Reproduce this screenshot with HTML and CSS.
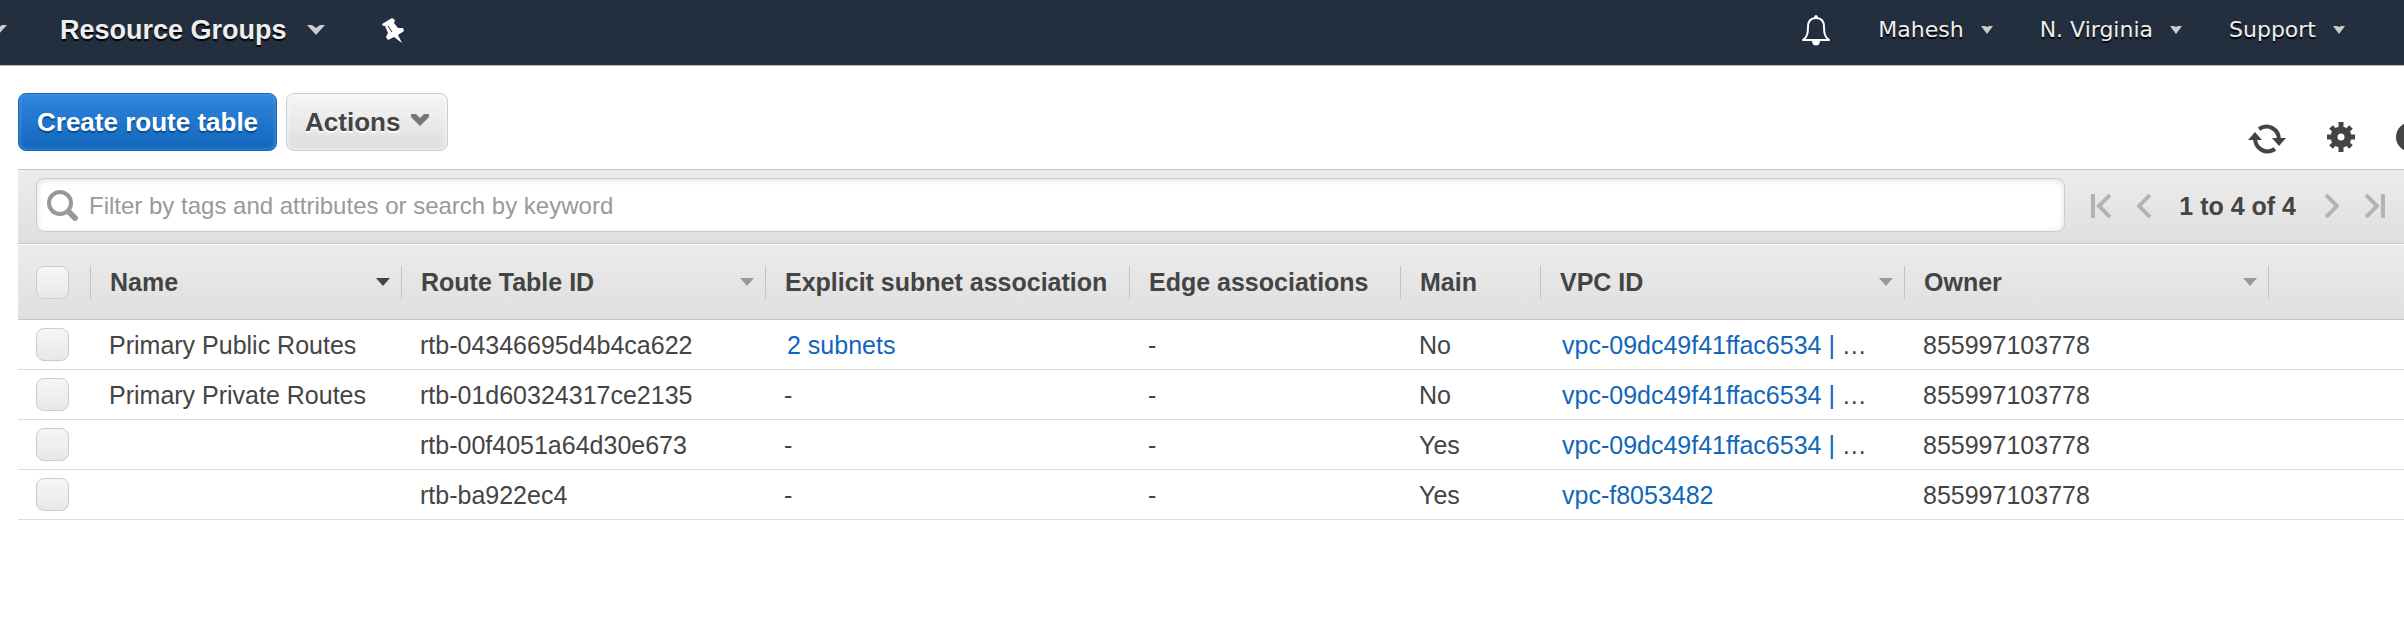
FILE: index.html
```html
<!DOCTYPE html>
<html lang="en">
<head>
<meta charset="utf-8">
<title>Route Tables</title>
<link rel="stylesheet" href="styles.css">
</head>
<body>
<header class="nav">
  <div class="nav-left">
    <button class="nav-menu nav-services" aria-label="Services"><svg class="chev" viewBox="0 0 18 10"><path d="M0 0h5l4 3 4-3h5L9 10z"/></svg></button>
    <button class="nav-menu nav-groups">Resource Groups <svg class="chev" viewBox="0 0 18 10"><path d="M0 0h5l4 3 4-3h5L9 10z"/></svg></button>
    <button class="nav-menu" aria-label="Pin shortcuts"><svg class="pin" viewBox="0 0 22 25"><path d="M0 6 10 0l3 2-1 3 4 5 5 0 1 3-6 4 4 8-8-6-6 3-2-3 2-4-3-7-2 0z"/><path d="m6 8 4 6" fill="none" stroke="#232f3e" stroke-width="1"/></svg></button>
  </div>
  <div class="nav-right">
    <button class="nav-menu" aria-label="Notifications"><svg class="bell" viewBox="0 0 30 32"><path d="M15 4c-5 0-8 3-8 9 0 7-1 10-5 13h26c-4-3-5-6-5-13 0-6-3-9-8-9z" fill="none" stroke="#fff" stroke-width="2" stroke-linejoin="round"/><path d="M13 4c0-4 4-4 4 0zM11 27h8c0 6-8 6-8 0z" fill="#fff"/></svg></button>
    <button class="nav-menu">Mahesh <svg class="tri" viewBox="0 0 12 8"><path d="M0 0h4l2 1 2-1h4L6 8z"/></svg></button>
    <button class="nav-menu">N. Virginia <svg class="tri" viewBox="0 0 12 8"><path d="M0 0h4l2 1 2-1h4L6 8z"/></svg></button>
    <button class="nav-menu">Support <svg class="tri" viewBox="0 0 12 8"><path d="M0 0h4l2 1 2-1h4L6 8z"/></svg></button>
  </div>
</header>
<main>
  <div class="toolbar">
    <div class="actions">
      <button class="btn btn-primary">Create route table</button>
      <button class="btn btn-plain">Actions <svg class="chev" viewBox="0 0 18 12"><path d="M0 0h5l4 4 4-4h5v3l-9 9-9-9z"/></svg></button>
    </div>
    <div class="tools">
      <button class="tool" aria-label="Refresh"><svg class="refresh" viewBox="0 -2 38 32"><g fill="none" stroke="#444" stroke-width="4"><path d="M11 5c9-6 20 0 20 11"/><path d="M27 25c-9 6-20 0-20-11"/></g><path d="M24 14h14l-7 8zM0 16h14L7 8z" fill="#444"/></svg></button>
      <button class="tool" aria-label="Settings"><svg class="gear" viewBox="0 0 28 30"><g fill="none" stroke="#444"><circle cx="14" cy="15" r="7" stroke-width="7"/><path d="M14 0v8M14 22v8M0 15h7M21 15h7M4 5l5 5M19 20l5 5M24 5l-5 5M9 20l-5 5" stroke-width="5"/></g></svg></button>
      <button class="tool" aria-label="Help"><svg class="help" viewBox="0 0 30 30"><circle cx="15" cy="15" r="15" fill="#444"/></svg></button>
    </div>
  </div>
  <div class="filter">
    <label class="search">
      <svg class="glass" viewBox="0 0 32 32"><circle cx="13" cy="13" r="11" fill="none" stroke="#999" stroke-width="4"/><path d="m22 22 6 6" stroke="#999" stroke-width="6" stroke-linecap="round"/></svg>
      <input class="search-input" type="text" aria-label="Filter" placeholder="Filter by tags and attributes or search by keyword">
    </label>
    <div class="pager">
      <button class="page" aria-label="First page"><svg class="page-end" viewBox="0 0 20 24"><path d="M2 0v24M19 1 8 12l11 11"/></svg></button>
      <button class="page" aria-label="Previous page"><svg class="page-step" viewBox="0 0 14 24"><path d="M13 1 2 12l11 11"/></svg></button>
      <span class="page-count">1 to 4 of 4</span>
      <button class="page" aria-label="Next page"><svg class="page-step" viewBox="0 0 14 24"><path d="m1 1 11 11L1 23"/></svg></button>
      <button class="page" aria-label="Last page"><svg class="page-end" viewBox="0 0 20 24"><path d="M18 0v24M1 1l11 11L1 23"/></svg></button>
    </div>
  </div>
  <table class="grid">
    <colgroup><col class="c-check"><col class="c-name"><col class="c-id"><col class="c-id"><col class="c-edge"><col class="c-main"><col class="c-id"><col class="c-id"><col></colgroup>
    <thead>
      <tr>
        <th><div class="head"><input class="tick" type="checkbox" aria-label="Select all"></div></th>
        <th><div class="head sorted"><span>Name</span><svg class="sort" viewBox="0 0 14 8"><path d="M0 0h14L7 8z"/></svg></div></th>
        <th><div class="head"><span>Route Table ID</span><svg class="sort" viewBox="0 0 14 8"><path d="M0 0h14L7 8z"/></svg></div></th>
        <th><div class="head"><span>Explicit subnet association</span></div></th>
        <th><div class="head"><span>Edge associations</span></div></th>
        <th><div class="head"><span>Main</span></div></th>
        <th><div class="head"><span>VPC ID</span><svg class="sort" viewBox="0 0 14 8"><path d="M0 0h14L7 8z"/></svg></div></th>
        <th><div class="head"><span>Owner</span><svg class="sort" viewBox="0 0 14 8"><path d="M0 0h14L7 8z"/></svg></div></th>
        <th></th>
      </tr>
    </thead>
    <tbody>
      <tr><td><input class="tick" type="checkbox" aria-label="Select rtb-04346695d4b4ca622"></td><td>Primary Public Routes</td><td>rtb-04346695d4b4ca622</td><td><a href="#">2 subnets</a></td><td>-</td><td>No</td><td><a href="#">vpc-09dc49f41ffac6534 |</a> …</td><td>855997103778</td><td></td></tr>
      <tr><td><input class="tick" type="checkbox" aria-label="Select rtb-01d60324317ce2135"></td><td>Primary Private Routes</td><td>rtb-01d60324317ce2135</td><td>-</td><td>-</td><td>No</td><td><a href="#">vpc-09dc49f41ffac6534 |</a> …</td><td>855997103778</td><td></td></tr>
      <tr><td><input class="tick" type="checkbox" aria-label="Select rtb-00f4051a64d30e673"></td><td></td><td>rtb-00f4051a64d30e673</td><td>-</td><td>-</td><td>Yes</td><td><a href="#">vpc-09dc49f41ffac6534 |</a> …</td><td>855997103778</td><td></td></tr>
      <tr><td><input class="tick" type="checkbox" aria-label="Select rtb-ba922ec4"></td><td></td><td>rtb-ba922ec4</td><td>-</td><td>-</td><td>Yes</td><td><a href="#">vpc-f8053482</a></td><td>855997103778</td><td></td></tr>
    </tbody>
  </table>
</main>
</body>
</html>
```
FILE: styles.css
```css
* { box-sizing: border-box; }
body {
  margin: 0;
  overflow-x: hidden;
  background: #fff;
  color: #444;
  font: 25px/28px "Liberation Sans", Arial, sans-serif;
}
button { font: inherit; color: inherit; cursor: pointer; }
svg { display: block; flex: none; }

.nav {
  display: flex;
  justify-content: space-between;
  height: 66px;
  padding: 0 59px 5px 0;
  background: #232f3e;
  border-bottom: 1px solid #b9bdc2;
}
.nav-left, .nav-right { display: flex; align-items: center; }
.nav-left { gap: 53px; }
.nav-right { gap: 47px; font-family: "DejaVu Sans", Verdana, sans-serif; font-size: 22px; }
.nav-menu {
  display: flex;
  align-items: center;
  padding: 0;
  border: 0;
  background: none;
  color: #eee;
  white-space: nowrap;
  text-shadow: 0 2px 1px #000;
}
.nav-services { margin-left: -11px; }
.nav-groups { gap: 20px; margin-right: 4px; font-size: 27px; font-weight: bold; }
.nav-right .nav-menu { gap: 17px; }
.nav .chev { width: 18px; height: 10px; fill: #ccc; }
.tri { width: 12px; height: 8px; fill: #ccc; }
.pin { width: 22px; height: 25px; fill: #fff; }
.bell { width: 30px; height: 32px; }

.toolbar {
  display: flex;
  justify-content: space-between;
  align-items: flex-start;
  padding: 27px 0 15px 18px;
}
.actions { display: flex; gap: 9px; }
.btn {
  display: flex;
  align-items: center;
  gap: 11px;
  height: 58px;
  padding: 0 18px;
  border: 1px solid #ccc;
  border-radius: 8px;
  font-size: 26px;
  font-weight: bold;
  white-space: nowrap;
}
.btn-primary {
  border-color: #1166bb;
  background: linear-gradient(#2f86de, #1166bb);
  color: #fff;
  text-shadow: 0 2px 1px #0a4a8c;
  box-shadow: inset 0 0 4px #5a9be0;
}
.btn-plain {
  background: linear-gradient(#f6f6f6, #dedede);
  text-shadow: 0 2px 0 #fff;
  box-shadow: inset 0 0 4px #fff;
}
.btn .chev { width: 18px; height: 12px; fill: #777; margin-bottom: 4px; }
.tools { display: flex; align-items: flex-start; gap: 41px; margin: 29px -22px 0 0; }
.tool, .page { padding: 0; border: 0; background: none; }
.refresh { width: 38px; height: 32px; }
.gear { width: 28px; height: 30px; }
.help { width: 30px; height: 30px; }

.filter {
  display: flex;
  align-items: center;
  gap: 26px;
  height: 75px;
  margin-left: 18px;
  padding: 0 19px 3px 18px;
  border-top: 1px solid #c6c6c6;
  border-bottom: 1px solid #c6c6c6;
  background: linear-gradient(#ececec, #dfdfdf);
}
.search {
  flex: 1;
  display: flex;
  align-items: center;
  gap: 10px;
  height: 54px;
  padding: 2px 10px 0;
  border: 1px solid #ccc;
  border-radius: 8px;
  background: #fff;
  box-shadow: inset 0 1px 6px #ddd;
}
.glass { width: 32px; height: 32px; }
.search-input {
  flex: 1;
  min-width: 0;
  padding: 0;
  border: 0;
  outline: 0;
  background: none;
  color: #444;
  font: inherit;
  font-size: 24px;
}
.search-input::placeholder { color: #999; opacity: 1; }
.pager { display: flex; align-items: center; gap: 26px; padding-top: 2px; white-space: nowrap; }
.page-end, .page-step { fill: none; stroke: #b3b3b3; stroke-width: 4; }
.page-end { width: 20px; height: 24px; }
.page-step { width: 14px; height: 24px; }
.page-count { margin: 0 3px 0 2px; font-weight: bold; }

.grid {
  width: calc(100% - 18px);
  margin-left: 18px;
  table-layout: fixed;
  border-collapse: separate;
  border-spacing: 0;
}
.c-check { width: 73px; }
.c-name { width: 311px; }
.c-id { width: 364px; }
.c-edge { width: 271px; }
.c-main { width: 140px; }
.grid th {
  height: 76px;
  padding: 0;
  border-top: 1px solid #fff;
  border-bottom: 1px solid #c6c6c6;
  background: linear-gradient(#ececec, #dfdfdf);
  text-align: left;
}
.head {
  display: flex;
  align-items: center;
  justify-content: space-between;
  height: 33px;
  padding: 0 11px 0 19px;
  border-right: 1px solid #c4c4c4;
  box-shadow: 1px 0 #fff;
}
.head span { white-space: nowrap; line-height: 32px; }
th:first-child .head { padding: 0 18px; }
.sort { width: 14px; height: 8px; fill: #999; }
.sorted .sort { fill: #444; }
.grid td {
  height: 50px;
  padding: 0 18px;
  border-bottom: 1px solid #ddd;
  white-space: nowrap;
}
.grid a { margin-left: 3px; color: #1166bb; text-decoration: none; }
.tick {
  appearance: none;
  display: block;
  width: 33px;
  height: 33px;
  margin: 0;
  border: 1px solid #ccc;
  border-radius: 8px;
  background: linear-gradient(#f6f6f6, #e8e8e8);
}
```
